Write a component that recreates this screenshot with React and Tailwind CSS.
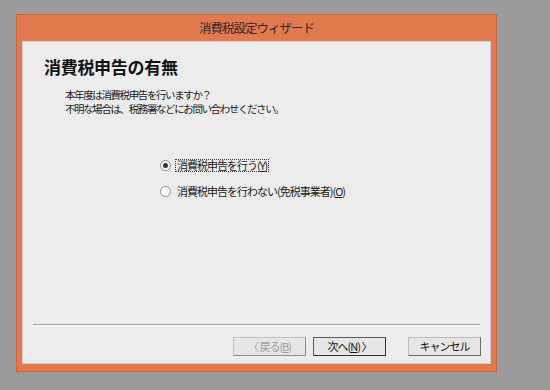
const font = { fontFamily: '"Noto Sans CJK JP", "Noto Sans", sans-serif' };

function Radio({ checked, label, focus }) {
  return (
    <label className="flex items-center gap-[5px] text-[11px] tracking-[-1px] text-[#1a1a1a] leading-none">
      <span className="w-[11px] h-[11px] rounded-full border border-[#8d8d8d] bg-white flex items-center justify-center">
        {checked && <span className="w-[5px] h-[5px] rounded-full bg-[#333]" />}
      </span>
      <span className={focus ? 'outline outline-1 outline-dotted outline-[#333] px-[1px]' : 'px-[1px]'}>
        {label}
      </span>
    </label>
  );
}

function Button({ children, disabled, primary }) {
  return (
    <button
      className={`w-[73px] h-[19px] text-[11px] tracking-[-1px] leading-none flex items-center justify-center bg-[#e6e6e6] border ${
        primary
          ? 'border-[#5a5a5a] border-b-[#333] border-r-[#333] text-[#111]'
          : disabled
          ? 'border-[#c2c2c2] border-b-[#8a8a8a] border-r-[#8a8a8a] text-[#9d9d9d]'
          : 'border-[#bcbcbc] border-b-[#6d6d6d] border-r-[#6d6d6d] text-[#111]'
      }`}
    >
      {children}
    </button>
  );
}

export default function App() {
  return (
    <div className="w-[550px] h-[390px] bg-[#9b9b9b] pt-[14px] pl-[16px]" style={font}>
      <div className="w-[481px] h-[358px] bg-[#e2794f] border border-[#c9663f] flex flex-col px-[5px] pb-[7px]">
        {/* Title bar */}
        <div className="h-[26px] flex items-center justify-center text-[12.5px] tracking-[-1px] text-[#2b2b2b]">
          消費税設定ウィザード
        </div>

        {/* Body */}
        <div className="flex-1 bg-[#ececec] border border-[#d0d0d0] flex flex-col">
          <div className="pl-[21px] pt-[16px] text-[17px] tracking-[-0.3px] font-bold text-[#111] leading-none">
            消費税申告の有無
          </div>
          <div className="pl-[42px] pt-[13px] text-[10.5px] tracking-[-1.4px] text-[#1a1a1a] leading-[14px]">
            <p>本年度は消費税申告を行いますか？</p>
            <p>不明な場合は、税務署などにお問い合わせください。</p>
          </div>

          <div className="pl-[137px] pt-[44px] flex flex-col gap-[15px]">
            <Radio checked focus label={<>消費税申告を行う(<u>Y</u>)</>} />
            <Radio label={<>消費税申告を行わない(免税事業者)(<u>O</u>)</>} />
          </div>

          <div className="flex-1" />

          <div className="mx-[10px] h-[2px] border-t border-[#a0a0a0] border-b border-b-white" />

          <div className="flex justify-end items-center gap-[7px] pr-[9px] pt-[11px] pb-[7px]">
            <Button disabled>〈 戻る(<u>B</u>)</Button>
            <Button primary>次へ(<u>N</u>) 〉</Button>
            <div className="ml-[15px]">
              <Button>キャンセル</Button>
            </div>
          </div>
        </div>
      </div>
    </div>
  );
}
